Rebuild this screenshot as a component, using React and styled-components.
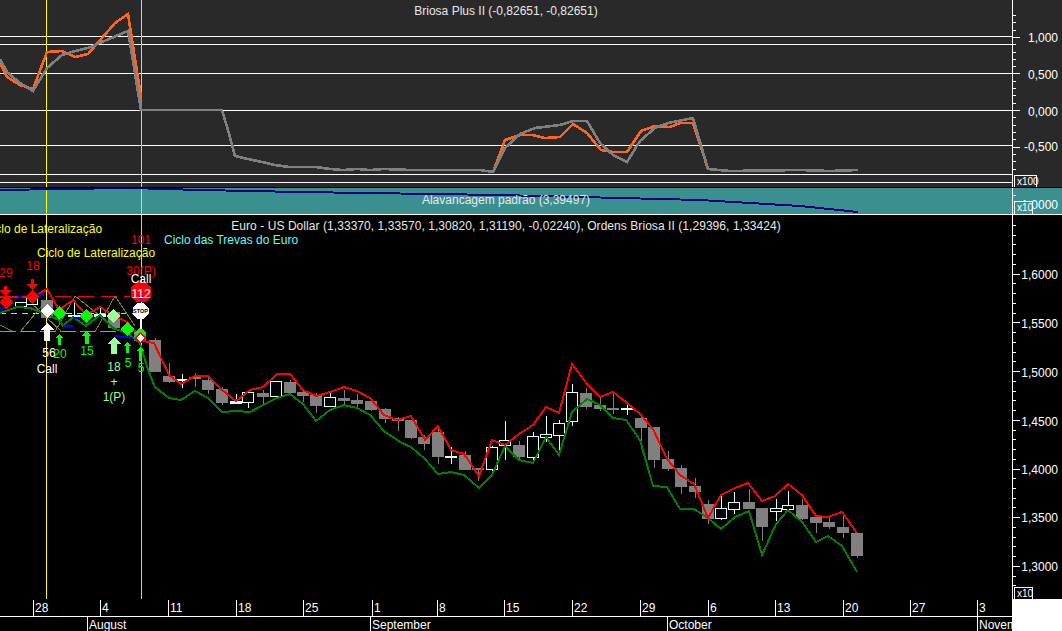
import React from 'react';
import styled, { createGlobalStyle } from 'styled-components';

const GlobalStyle = createGlobalStyle`
  html, body {
    margin: 0;
    padding: 0;
    background: #000;
  }
`;

const WHITE = '#ffffff';
const YELLOW = '#ffff00';
const CYAN = '#55ffff';
const RED = '#ff0000';
const LIME = '#00ff00';
const PALE = '#99ff99';

const toPoints = (list) => list.map((p) => p.join(',')).join(' ');

// top panel
const levels = [36, 44, 73, 110, 145, 174, 182];
const grayLine = [[0, 59], [7, 72], [20, 83], [33, 91], [47, 68], [62, 55], [75, 51], [88, 48], [102, 42], [128, 31], [141, 110], [222, 110], [228, 130], [235, 156], [248, 159], [262, 162], [275, 165], [289, 167], [316, 167], [330, 169], [343, 170], [357, 169], [370, 170], [384, 169], [411, 170], [465, 170], [480, 170], [493, 172], [505, 148], [520, 134], [535, 128], [560, 125], [573, 121], [587, 121], [600, 143], [613, 155], [627, 162], [640, 141], [655, 128], [668, 123], [693, 118], [708, 169], [730, 171], [800, 170], [830, 171], [858, 170]];
const orangeA = [[0, 63], [7, 77], [20, 85], [33, 89], [47, 52], [62, 51], [75, 57], [88, 54], [102, 38], [115, 23], [128, 14], [141, 97], [141, 110]];
const orangeB = [[493, 172], [505, 140], [520, 135], [532, 135], [545, 138], [560, 137], [573, 124], [587, 133], [601, 150], [613, 152], [627, 152], [641, 131], [655, 126], [670, 127], [680, 123], [693, 123], [708, 169]];

// teal panel
const leverage = [[0, 190], [60, 189], [130, 188], [200, 190], [300, 192], [500, 195], [700, 200], [800, 206], [858, 212]];

// main panel: x, body top, body bottom, wick top, wick bottom, rising
const candles = [
  [47, 300, 317, 300, 317, 0], [21, 302, 306, 302, 306, 1], [32, 298, 304, 298, 304, 1], [74, 315, 316, 302, 317, 1], [100, 314, 316, 307, 316, 1], [114, 312, 327, 312, 327, 0], [140, 332, 340, 332, 340, 0],
  [155, 340, 371, 338, 371, 0], [169, 376, 381, 363, 382, 0], [182, 379, 380, 374, 387, 1], [195, 377, 378, 373, 386, 0], [208, 380, 389, 375, 393, 0], [222, 389, 402, 387, 404, 0], [236, 401, 403, 394, 403, 1], [248, 392, 402, 392, 407, 1], [263, 393, 396, 390, 403, 0], [276, 381, 396, 381, 397, 1], [290, 382, 392, 380, 393, 0], [303, 392, 395, 391, 401, 0], [316, 395, 405, 393, 412, 0], [330, 397, 406, 393, 406, 1], [344, 398, 400, 390, 404, 0], [357, 400, 403, 394, 407, 0], [371, 401, 409, 398, 410, 0], [385, 409, 418, 408, 422, 0], [398, 418, 420, 417, 430, 0],
  [411, 420, 437, 420, 438, 0], [424, 437, 443, 435, 449, 0], [438, 432, 456, 426, 463, 0], [451, 456, 457, 447, 463, 1], [465, 455, 469, 451, 469, 0], [478, 468, 469, 468, 480, 0], [492, 447, 469, 446, 470, 1], [505, 440, 445, 421, 459, 1], [519, 445, 456, 441, 460, 0], [533, 436, 457, 432, 461, 1], [546, 434, 437, 416, 441, 1], [559, 423, 435, 420, 455, 1], [572, 392, 421, 384, 425, 1], [586, 393, 406, 388, 408, 0], [600, 405, 408, 397, 410, 0], [613, 408, 409, 394, 413, 0], [627, 408, 409, 403, 414, 1], [641, 418, 427, 415, 440, 0],
  [654, 427, 459, 427, 467, 0], [668, 459, 468, 451, 470, 0], [681, 468, 486, 465, 493, 0], [695, 486, 491, 478, 497, 0], [708, 504, 518, 500, 523, 0], [721, 508, 518, 495, 519, 1], [734, 502, 509, 492, 513, 1], [749, 502, 508, 489, 508, 0], [762, 508, 526, 508, 540, 0], [776, 508, 511, 499, 520, 1], [788, 505, 509, 491, 509, 1], [802, 505, 518, 499, 519, 0], [816, 517, 522, 517, 532, 0], [829, 522, 526, 518, 528, 0], [843, 527, 532, 515, 537, 0], [857, 533, 555, 533, 557, 0],
];
const redLine = [[0, 297], [33, 297], [47, 289], [59, 310], [73, 300], [86, 315], [100, 307], [113, 315], [127, 322], [140, 337], [143, 341], [154, 343], [169, 375], [181, 384], [195, 376], [208, 376], [222, 390], [236, 401], [250, 390], [263, 387], [277, 374], [290, 374], [303, 390], [316, 396], [330, 392], [344, 387], [357, 391], [370, 398], [384, 415], [397, 420], [411, 416], [425, 440], [438, 426], [451, 450], [464, 454], [479, 476], [492, 440], [505, 445], [519, 434], [533, 425], [546, 407], [559, 413], [572, 364], [587, 384], [600, 397], [613, 392], [626, 402], [640, 414], [653, 429], [667, 459], [680, 475], [694, 484], [708, 518], [721, 495], [735, 488], [748, 483], [762, 501], [775, 496], [788, 484], [802, 495], [816, 516], [828, 517], [842, 512], [857, 533]];
const greenLine = [[0, 313], [17, 307], [30, 308], [43, 313], [59, 320], [63, 326], [73, 317], [86, 326], [100, 315], [113, 328], [127, 333], [140, 343], [148, 370], [155, 387], [169, 398], [181, 400], [195, 391], [208, 398], [222, 412], [236, 411], [250, 412], [263, 405], [277, 398], [290, 394], [303, 404], [316, 421], [330, 410], [344, 405], [357, 408], [370, 415], [384, 431], [400, 442], [411, 447], [425, 459], [438, 474], [451, 472], [464, 475], [479, 488], [492, 475], [505, 446], [519, 460], [533, 463], [546, 437], [559, 455], [572, 412], [587, 399], [600, 405], [613, 418], [626, 420], [640, 440], [653, 486], [667, 487], [680, 509], [694, 509], [708, 518], [721, 529], [735, 517], [749, 511], [762, 555], [776, 524], [788, 510], [802, 522], [816, 542], [828, 536], [842, 546], [857, 572]];
const oliveLines = [
  [[0, 325], [12, 331]], [[20, 332], [45, 302]], [[30, 302], [62, 332]], [[55, 332], [75, 296], [118, 330]], [[95, 332], [115, 296], [135, 326]],
];
const blueBits = [[[0, 308], [8, 308]], [[33, 295], [44, 295]], [[63, 326], [73, 326]], [[73, 318], [80, 318]], [[115, 336], [133, 338]]];
const diamonds = [
  [6, 302, 7, RED], [32, 297, 7, RED], [47, 311, 7, WHITE], [59, 313, 7, LIME], [86, 316, 7, LIME], [113, 316, 7, PALE], [127, 329, 7, LIME], [140, 333, 6, LIME],
];
const upArrows = [
  [47, 323, 341, 7, WHITE], [59.5, 334, 345, 4, LIME], [86.5, 331, 344, 5, LIME], [114, 337, 354, 7, PALE], [127.5, 342, 353, 4, LIME], [140.5, 347, 361, 4, LIME],
];
const downArrows = [[5.5, 286, 296], [32.5, 279, 290]];
const signals = [
  ['29', 6, 273, RED], ['18', 33, 266, RED], ['101', 141, 240, RED], ['30(P)', 141, 271, RED], ['Call', 141, 279, WHITE], ['112', 141, 294, WHITE],
  ['56', 49, 353, WHITE], ['20', 60, 354, LIME], ['Call', 47, 369, WHITE], ['15', 87, 351, LIME], ['18', 114, 367, PALE], ['+', 114, 382, PALE], ['1(P)', 114, 397, PALE], ['5', 128, 363, LIME], ['5', 141, 368, LIME],
];

const dayTicks = [[33, '28'], [100, '4'], [168, '11'], [236, '18'], [303, '25'], [372, '1'], [437, '8'], [504, '15'], [572, '22'], [640, '29'], [708, '6'], [775, '13'], [843, '20'], [910, '27'], [977, '3']];
const monthTicks = [[87, 'August'], [370, 'September'], [667, 'October'], [977, 'November']];

const range = (from, step, count) => Array.from({ length: count }, (_, i) => from + step * i);

const Page = styled.div`
  display: flex;
  flex-direction: column;
  width: 1062px;
  height: 631px;
  overflow: hidden;
  background: #000;
  font-family: 'Liberation Sans', Arial, sans-serif;
  font-size: 12px;
  color: ${WHITE};
`;
const Pane = styled.section`
  position: relative;
  display: flex;
  flex: none;
  box-sizing: border-box;
  height: ${(p) => p.$height}px;
  margin-bottom: ${(p) => p.$gap || 0}px;
  background: ${(p) => p.$bg};
  border-bottom: ${(p) => (p.$rule ? `1px solid ${WHITE}` : 'none')};
`;
const Plot = styled.svg`
  display: block;
  flex: none;
  width: 1012px;
  height: 100%;
`;
const Scale = styled.svg`
  display: block;
  flex: none;
  width: 50px;
  height: 100%;
`;
const Title = styled.div`
  position: absolute;
  left: 0;
  top: ${(p) => p.$top}px;
  width: 1012px;
  text-align: center;
  line-height: 14px;
  letter-spacing: ${(p) => p.$spacing || 0}px;
  color: #e8e8e8;
  white-space: nowrap;
`;
const Badge = styled.div`
  position: absolute;
  left: 1014px;
  bottom: 0;
  box-sizing: border-box;
  width: ${(p) => p.$width}px;
  height: ${(p) => p.$height}px;
  padding-left: 2px;
  border: 1px solid ${WHITE};
  border-bottom: none;
  background: ${(p) => p.$bg};
  font-size: 10px;
  line-height: 11px;
`;
const Footer = styled.footer`
  display: flex;
  flex: 1;
`;
const TimeAxis = styled.svg`
  display: block;
  flex: none;
  width: 1012px;
  height: 32px;
`;
const Corner = styled.div`
  flex: 1;
  background: ${WHITE};
`;
const Label = styled.text`
  font-family: 'Liberation Sans', Arial, sans-serif;
  font-size: ${(p) => p.$size || 12}px;
  font-weight: ${(p) => p.$weight || 400};
  fill: ${(p) => p.$color || WHITE};
  text-anchor: ${(p) => p.$anchor || 'start'};
`;
const Trace = styled.polyline`
  fill: none;
  stroke: ${(p) => p.$color};
  stroke-width: ${(p) => p.$width || 2}px;
  stroke-dasharray: ${(p) => p.$dash || 'none'};
  stroke-linejoin: miter;
  shape-rendering: crispEdges;
`;
const Bar = styled.rect`
  fill: ${(p) => p.$color};
  shape-rendering: crispEdges;
`;
const HollowBody = styled.rect`
  fill: #000;
  stroke: #dcffff;
  stroke-width: 1px;
  shape-rendering: crispEdges;
`;
const Mark = styled.polygon`
  fill: ${(p) => p.$color};
  stroke: ${(p) => p.$stroke || 'none'};
  stroke-width: ${(p) => (p.$stroke ? 2 : 0)}px;
  shape-rendering: crispEdges;
`;

const Crosshairs = ({ top, bottom }) => (
  <>
    <Bar x={46} y={top} width={1} height={bottom - top} $color={YELLOW} />
    <Bar x={141} y={top} width={1} height={bottom - top} $color={CYAN} />
  </>
);

const ValueScale = ({ top, height, ticks, labels }) => (
  <Scale viewBox={`1012 ${top} 50 ${height}`}>
    <Bar x={1012} y={top} width={1} height={height} $color={WHITE} />
    {ticks.map(([y, len]) => (
      <Bar key={y} x={1013} y={Math.round(y)} width={len} height={1} $color={WHITE} />
    ))}
    {labels.map(([text, y]) => (
      <Label key={text} x={1058} y={y + 5} $anchor="end">{text}</Label>
    ))}
  </Scale>
);

const Candle = ({ x, top, bottom, wickTop, wickBottom, up }) => {
  const wick = up ? '#dcffff' : '#808080';
  const tall = bottom - top > 2;
  return (
    <>
      <Bar x={x} y={wickTop} width={1} height={wickBottom - wickTop + 1} $color={wick} />
      {up && tall ? (
        <HollowBody x={x - 5.5} y={top + 0.5} width={11} height={bottom - top} />
      ) : (
        <Bar x={x - 6} y={top} width={12} height={bottom - top + 1} $color={wick} />
      )}
    </>
  );
};

const UpArrow = ({ x, top, bottom, half, color }) => {
  const neck = top + half;
  const stem = Math.max(1, half / 2.5);
  return (
    <Mark
      $color={color}
      points={toPoints([[x, top], [x + half, neck], [x + stem, neck], [x + stem, bottom], [x - stem, bottom], [x - stem, neck], [x - half, neck]])}
    />
  );
};

const DownArrow = ({ x, top, bottom }) => (
  <Mark
    $color={RED}
    points={toPoints([[x - 1.5, top], [x + 1.5, top], [x + 1.5, bottom - 6], [x + 6, bottom - 6], [x, bottom], [x - 6, bottom - 6], [x - 1.5, bottom - 6]])}
  />
);

const Diamond = ({ x, y, r, color, stroke }) => (
  <Mark $color={color} $stroke={stroke} points={toPoints([[x, y - r], [x + r, y], [x, y + r], [x - r, y]])} />
);

const Octagon = ({ x, y, r, color }) => {
  const c = r * 0.42;
  return (
    <Mark
      $color={color}
      points={toPoints([[x - c, y - r], [x + c, y - r], [x + r, y - c], [x + r, y + c], [x + c, y + r], [x - c, y + r], [x - r, y + c], [x - r, y - c]])}
    />
  );
};

const OscillatorPane = () => (
  <Pane $height={187} $gap={1} $bg="#292929">
    <Plot viewBox="0 0 1012 187">
      {levels.map((y) => <Bar key={y} x={0} y={y} width={1012} height={1} $color={WHITE} />)}
      <Crosshairs top={0} bottom={187} />
      <Trace points={toPoints(orangeA)} $color="#ff6422" $width={2.6} />
      <Trace points={toPoints(orangeB)} $color="#ff6422" $width={2.6} />
      <Trace points={toPoints(grayLine)} $color="#808080" $width={2.6} />
    </Plot>
    <ValueScale
      top={0}
      height={187}
      ticks={range(15, 7.31, 22).map((y, i) => [y, (i + 2) % 5 === 0 ? 7 : 3])}
      labels={[['1,000', 37], ['0,500', 74], ['0,000', 111], ['-0,500', 146]]}
    />
    <Title $top={4}>Briosa Plus II (-0,82651, -0,82651)</Title>
    <Badge $width={23} $height={12} $bg="#292929">x100</Badge>
  </Pane>
);

const LeveragePane = () => (
  <Pane $height={27} $rule $bg="#3a8f8f">
    <Plot viewBox="0 188 1012 26">
      <Crosshairs top={188} bottom={214} />
      <Trace points={toPoints(leverage)} $color="#000080" />
    </Plot>
    <ValueScale top={188} height={26} ticks={[[195, 3]]} labels={[['1,0000', 204]]} />
    <Title $top={5}>Alavancagem padrão (3,39497)</Title>
    <Badge $width={19} $height={13} $bg="#3a8f8f">x10</Badge>
  </Pane>
);

const PricePane = () => (
  <Pane $height={384} $bg="#000">
    <Plot viewBox="0 215 1012 384">
      <Trace points="0,296 36,296" $color={RED} $width={1} />
      <Trace points="55,296 130,296" $color={RED} $width={1} $dash="16 7" />
      <Trace points="0,313 133,313" $color={CYAN} $width={1} $dash="6 5" />
      <Trace points="0,331 133,331" $color={LIME} $width={1} $dash="16 4" />
      {oliveLines.map((line, i) => <Trace key={i} points={toPoints(line)} $color="#808000" $width={1} />)}
      <Crosshairs top={215} bottom={599} />
      {candles.map(([x, top, bottom, wickTop, wickBottom, up]) => (
        <Candle key={x} x={x} top={top} bottom={bottom} wickTop={wickTop} wickBottom={wickBottom} up={up} />
      ))}
      <Trace points={toPoints(greenLine)} $color="#008000" />
      <Trace points={toPoints(redLine)} $color={RED} />
      {blueBits.map((line, i) => <Trace key={i} points={toPoints(line)} $color="#0000ff" />)}
      <circle cx={20} cy={297} r={2} fill="#0000ff" />
      {downArrows.map(([x, top, bottom]) => <DownArrow key={x} x={x} top={top} bottom={bottom} />)}
      {diamonds.map(([x, y, r, color]) => <Diamond key={`${x}-${y}`} x={x} y={y} r={r} color={color} />)}
      <Diamond x={140.5} y={338} r={5} color={WHITE} stroke={RED} />
      {upArrows.map(([x, top, bottom, half, color]) => (
        <UpArrow key={x} x={x} top={top} bottom={bottom} half={half} color={color} />
      ))}
      <Octagon x={141} y={292} r={10} color={RED} />
      <circle cx={141} cy={297} r={2} fill="#0000ff" />
      <Bar x={140} y={319} width={2} height={10} $color={WHITE} />
      <Octagon x={140.5} y={311} r={8} color={WHITE} />
      <Label x={140.5} y={313} $size={5.5} $weight={700} $color="#000" $anchor="middle">STOP</Label>
      <Label x={-16} y={233} $color={YELLOW}>Ciclo de Lateralização</Label>
      <Label x={37} y={257} $color={YELLOW}>Ciclo de Lateralização</Label>
      <Label x={164} y={244} $color={CYAN}>Ciclo das Trevas do Euro</Label>
      {signals.map(([text, x, y, color]) => (
        <Label key={`${text}-${x}-${y}`} x={x} y={y + 4} $color={color} $anchor="middle">{text}</Label>
      ))}
    </Plot>
    <ValueScale
      top={215}
      height={384}
      ticks={range(225, 9.74, 38).map((y, i) => [y, i % 5 === 0 && i > 0 ? 7 : 3])}
      labels={[['1,6000', 274], ['1,5500', 323], ['1,5000', 372], ['1,4500', 421], ['1,4000', 469], ['1,3500', 517], ['1,3000', 566]]}
    />
    <Title $top={4} $spacing={0.06}>Euro - US Dollar (1,33370, 1,33570, 1,30820, 1,31190, -0,02240), Ordens Briosa II (1,29396, 1,33424)</Title>
    <Badge $width={19} $height={12} $bg="#000">x10</Badge>
  </Pane>
);

const App = () => (
  <Page>
    <GlobalStyle />
    <OscillatorPane />
    <LeveragePane />
    <PricePane />
    <Footer>
      <TimeAxis viewBox="0 599 1012 32">
        <Bar x={0} y={616} width={1012} height={1} $color={WHITE} />
        {dayTicks.map(([x, text]) => (
          <g key={x}>
            <Bar x={x} y={600} width={1} height={16} $color={WHITE} />
            <Label x={x + 2} y={612}>{text}</Label>
          </g>
        ))}
        {monthTicks.map(([x, text]) => (
          <g key={x}>
            <Bar x={x} y={617} width={1} height={14} $color={WHITE} />
            <Label x={x + 2} y={629}>{text}</Label>
          </g>
        ))}
      </TimeAxis>
      <Corner />
    </Footer>
  </Page>
);

export default App;
